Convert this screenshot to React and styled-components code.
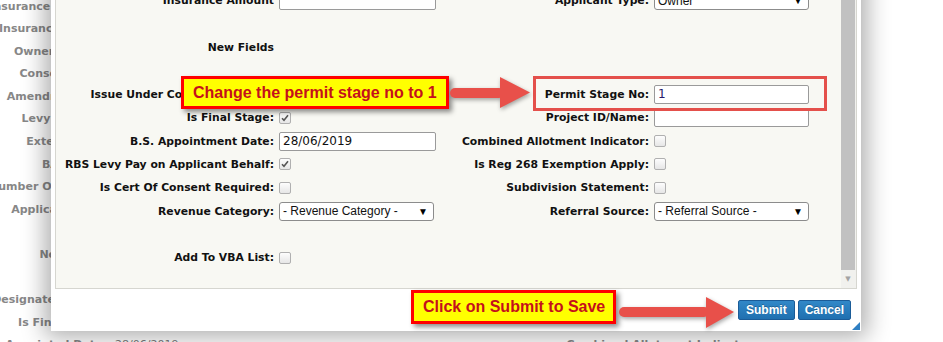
import React from 'react';
import styled, { createGlobalStyle } from 'styled-components';

const GlobalStyle = createGlobalStyle`
  html, body {
    margin: 0;
    padding: 0;
    background: #ffffff;
    overflow: hidden;
  }
  body {
    font-family: "DejaVu Sans", Verdana, sans-serif;
  }
`;

const Screen = styled.div`
  position: relative;
  width: 943px;
  height: 342px;
  overflow: hidden;
  background: #ffffff;
`;

/* page behind the modal */
const PageForm = styled.div`
  display: grid;
  grid-template-columns: 200px 150px 484px;
  grid-auto-rows: 22.6px;
  column-gap: 8px;
  margin: -5.3px 0 0 -93px;
  font: bold 11px "DejaVu Sans", Verdana, sans-serif;
  color: #878787;
`;

const PageLabel = styled.div`
  text-align: right;
  white-space: nowrap;
  align-self: center;
`;

const PageValue = styled.div`
  font-weight: normal;
  white-space: nowrap;
  align-self: center;
  color: #7a7a7a;
`;

/* modal */
const Dialog = styled.div`
  position: absolute;
  left: 51px;
  top: -24px;
  width: 810px;
  height: 355px;
  box-sizing: border-box;
  padding: 4px;
  background: #ffffff;
  box-shadow: 0 0 22px 6px rgba(0, 0, 0, 0.32);
  display: flex;
  flex-direction: column;
`;

const Panel = styled.div`
  height: 309px;
  box-sizing: border-box;
  border: 1px solid #d6d6d0;
  background: #f8f8f3;
  display: flex;
  overflow: hidden;
`;

const FormGrid = styled.div`
  flex: 1;
  display: grid;
  grid-template-columns: 218px 170px 195px 180px;
  grid-auto-rows: 23.36px;
  column-gap: 5px;
  padding-top: 8.3px;
  align-content: start;
`;

const Label = styled.div`
  text-align: right;
  white-space: nowrap;
  align-self: center;
  font: bold 10.8px "DejaVu Sans", Verdana, sans-serif;
  color: #111;
`;

const Field = styled.div`
  display: flex;
  align-items: center;
`;

const TextBox = styled.input`
  box-sizing: border-box;
  width: ${p => p.$w}px;
  height: 19px;
  margin: 0;
  padding: 0 3px;
  border: 1px solid #9a9a9a;
  border-radius: 2px;
  background: #fff;
  font: 12px "DejaVu Sans", Verdana, sans-serif;
  color: ${p => p.$ink || '#111'};
  outline: none;
`;

const SelectBox = styled.div`
  box-sizing: border-box;
  width: ${p => p.$w}px;
  height: 19px;
  padding: 0 5px 0 3px;
  border: 1px solid #8c8c8c;
  border-radius: 3px;
  background: #fff;
  display: flex;
  align-items: center;
  justify-content: space-between;
  font: 12px "Liberation Sans", Arial, sans-serif;
  color: #111;
`;

const Caret = styled.span`
  font-size: 10px;
  color: #000;
`;

const Box = styled.span`
  box-sizing: border-box;
  width: 12px;
  height: 12px;
  border: 1px solid #b0b0b0;
  border-radius: 2px;
  background: linear-gradient(#fdfdfd, #e6e6e6);
  display: inline-flex;
  align-items: center;
  justify-content: center;
`;

const Scroll = styled.div`
  width: 15px;
  display: flex;
  flex-direction: column;
  background: #f1f1ee;
`;

const Thumb = styled.div`
  flex: 1;
  margin-right: 1px;
  background: #c1c1c1;
`;

const ScrollArrow = styled.div`
  height: 18px;
  display: flex;
  align-items: center;
  justify-content: center;
  padding-right: 1px;
  font-size: 7px;
  color: #a3a3a3;
`;

const Footer = styled.div`
  flex: 1;
  display: flex;
  justify-content: flex-end;
  align-items: flex-start;
  gap: 3px;
  padding: 11px 6px 0 0;
`;

const Button = styled.button`
  height: 20px;
  padding: 0 ${p => p.$pad}px;
  border: 1px solid #1b5c98;
  border-radius: 2px;
  background: linear-gradient(#3188c8, #2070b0);
  color: #fff;
  font: bold 12px "Liberation Sans", Arial, sans-serif;
  text-shadow: 0 -1px 0 rgba(0, 0, 0, 0.25);
`;

const Grip = styled.div`
  position: absolute;
  right: 1px;
  bottom: 1px;
  width: 0;
  height: 0;
  border-left: 8px solid transparent;
  border-bottom: 8px solid #2e7fc2;
`;

/* annotations */
const Callout = styled.div`
  position: absolute;
  left: ${p => p.$x}px;
  top: ${p => p.$y}px;
  width: ${p => p.$w}px;
  height: ${p => p.$h}px;
  box-sizing: border-box;
  padding-left: 9px;
  border: 3px solid #ff0000;
  background: #ffff00;
  box-shadow: 3px 3px 5px rgba(0, 0, 0, 0.45);
  display: flex;
  align-items: center;
  font: bold 16px "Liberation Sans", Arial, sans-serif;
  color: #c4101c;
  white-space: nowrap;
`;

const Highlight = styled.div`
  position: absolute;
  left: 533px;
  top: 76px;
  width: 294px;
  height: 35px;
  box-sizing: border-box;
  border: 3px solid #e4504b;
`;

const ArrowSvg = styled.svg`
  position: absolute;
  left: ${p => p.$x}px;
  top: ${p => p.$y}px;
  overflow: visible;
  filter: drop-shadow(1px 2px 2px rgba(0, 0, 0, 0.35));
`;

const Check = ({ on }) => (
  <Box>
    {on && (
      <svg width="8" height="8" viewBox="0 0 8 8">
        <path d="M1 4.2 L3 6.3 L7 1.3" fill="none" stroke="#555" strokeWidth="1.6" />
      </svg>
    )}
  </Box>
);

const renderField = f => {
  if (!f) return <Field />;
  if (f.kind === 'text') return <Field><TextBox $w={f.w} $ink={f.ink} value={f.value || ''} readOnly /></Field>;
  if (f.kind === 'select') return <Field><SelectBox $w={f.w}>{f.value}<Caret>▼</Caret></SelectBox></Field>;
  return <Field><Check on={f.on} /></Field>;
};

const formRows = [
  { l: 'Insurance Amount', f: { kind: 'text', w: 157 }, r: 'Applicant Type:', rf: { kind: 'select', w: 155, value: 'Owner' } },
  {},
  { l: 'New Fields' },
  {},
  { l: 'Issue Under Council Approval:', f: { kind: 'check' }, r: 'Permit Stage No:', rf: { kind: 'text', w: 155, value: '1', ink: '#2a1a6a' } },
  { l: 'Is Final Stage:', f: { kind: 'check', on: true }, r: 'Project ID/Name:', rf: { kind: 'text', w: 155 } },
  { l: 'B.S. Appointment Date:', f: { kind: 'text', w: 157, value: '28/06/2019' }, r: 'Combined Allotment Indicator:', rf: { kind: 'check' } },
  { l: 'RBS Levy Pay on Applicant Behalf:', f: { kind: 'check', on: true }, r: 'Is Reg 268 Exemption Apply:', rf: { kind: 'check' } },
  { l: 'Is Cert Of Consent Required:', f: { kind: 'check' }, r: 'Subdivision Statement:', rf: { kind: 'check' } },
  { l: 'Revenue Category:', f: { kind: 'select', w: 155, value: '- Revenue Category -' }, r: 'Referral Source:', rf: { kind: 'select', w: 155, value: '- Referral Source -' } },
  {},
  { l: 'Add To VBA List:', f: { kind: 'check' } },
];

const pageRows = [
  ['Insurance Amount:'], ['Insurance Expiry:'], ['Owner Builder:'], ['Consent Type:'],
  ['Amendment No:'], ['Levy Amount:'], ['External Ref:'], ['BAL Level:'],
  ['Number Of Stages:'], ['Applicant Type:'], [''], ['New Fields'], [''],
  ['Designated Stage:'], ['Is Final Stage:'], ['B.S. Appointed Date:', '28/06/2019', 'Combined Allotment Indicator:'],
];

const App = () => (
  <>
    <GlobalStyle />
    <Screen>
      <PageForm>
        {pageRows.map(([l, v, r], i) => (
          <React.Fragment key={i}>
            <PageLabel>{l}</PageLabel>
            <PageValue>{v}</PageValue>
            <PageLabel>{r}</PageLabel>
          </React.Fragment>
        ))}
      </PageForm>

      <Dialog>
        <Panel>
          <FormGrid>
            {formRows.map((row, i) => (
              <React.Fragment key={i}>
                <Label>{row.l}</Label>
                {renderField(row.f)}
                <Label>{row.r}</Label>
                {renderField(row.rf)}
              </React.Fragment>
            ))}
          </FormGrid>
          <Scroll>
            <Thumb />
            <ScrollArrow>▼</ScrollArrow>
          </Scroll>
        </Panel>
        <Footer>
          <Button $pad={7}>Submit</Button>
          <Button $pad={6}>Cancel</Button>
        </Footer>
        <Grip />
      </Dialog>

      <Highlight />
      <Callout $x={181} $y={76} $w={268} $h={33}>Change the permit stage no to 1</Callout>
      <ArrowSvg $x={446} $y={74} width="90" height="36">
        <rect x="4" y="14" width="54" height="10" rx="5" fill="#e8504a" />
        <polygon points="54,3 84,18.5 54,34" fill="#e8504a" />
      </ArrowSvg>

      <Callout $x={411} $y={290} $w={205} $h={34}>Click on Submit to Save</Callout>
      <ArrowSvg $x={615} $y={294} width="125" height="38">
        <rect x="4" y="13" width="90" height="10" rx="5" fill="#e8504a" />
        <polygon points="91,3 119,18 91,34" fill="#e8504a" />
      </ArrowSvg>
    </Screen>
  </>
);

export default App;
